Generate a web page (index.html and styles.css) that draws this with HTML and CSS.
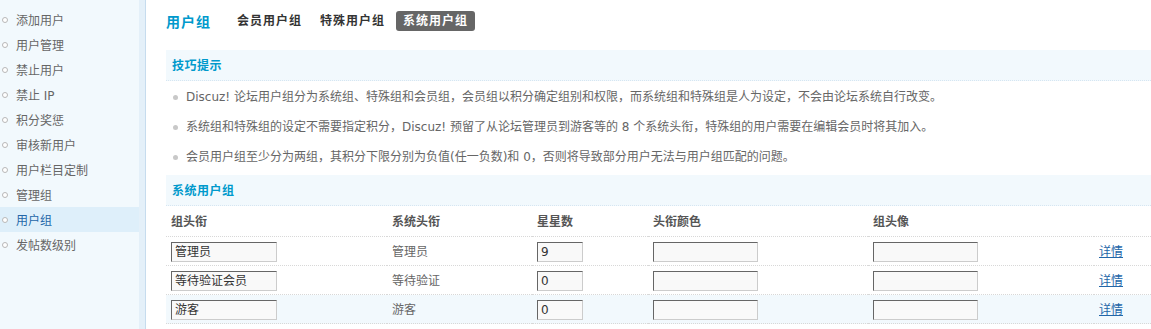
FILE: index.html
```html
<!DOCTYPE html>
<html lang="zh-CN">
<head>
    <meta charset="UTF-8">
    <title>用户组</title>
    <link rel="stylesheet" href="styles.css">
</head>
<body>
    <div class="side">
        <ul class="menu">
            <li><a href="#">添加用户</a></li>
            <li><a href="#">用户管理</a></li>
            <li><a href="#">禁止用户</a></li>
            <li><a href="#">禁止 IP</a></li>
            <li><a href="#">积分奖惩</a></li>
            <li><a href="#">审核新用户</a></li>
            <li><a href="#">用户栏目定制</a></li>
            <li><a href="#">管理组</a></li>
            <li class="on"><a href="#">用户组</a></li>
            <li><a href="#">发帖数级别</a></li>
        </ul>
    </div>

    <div class="main">
        <div class="itemtitle">
            <h3>用户组</h3>
            <ul class="tabs">
                <li><a href="#">会员用户组</a></li>
                <li><a href="#">特殊用户组</a></li>
                <li class="current"><a href="#">系统用户组</a></li>
            </ul>
        </div>

        <div class="partition">技巧提示</div>
        <ul class="tips">
            <li>Discuz! 论坛用户组分为系统组、特殊组和会员组，会员组以积分确定组别和权限，而系统组和特殊组是人为设定，不会由论坛系统自行改变。</li>
            <li>系统组和特殊组的设定不需要指定积分，Discuz! 预留了从论坛管理员到游客等的 8 个系统头衔，特殊组的用户需要在编辑会员时将其加入。</li>
            <li>会员用户组至少分为两组，其积分下限分别为负值(任一负数)和 0，否则将导致部分用户无法与用户组匹配的问题。</li>
        </ul>

        <div class="partition">系统用户组</div>
        <table class="tb">
            <colgroup>
                <col class="c1"><col class="c2"><col class="c3"><col class="c4"><col class="c5"><col>
            </colgroup>
            <tr>
                <th>组头衔</th>
                <th>系统头衔</th>
                <th>星星数</th>
                <th>头衔颜色</th>
                <th>组头像</th>
                <th></th>
            </tr>
            <tr>
                <td><input class="txt name" type="text" value="管理员"></td>
                <td>管理员</td>
                <td><input class="txt stars" type="text" value="9"></td>
                <td><input class="txt wide" type="text" value=""></td>
                <td><input class="txt wide" type="text" value=""></td>
                <td><a class="detail" href="#">详情</a></td>
            </tr>
            <tr>
                <td><input class="txt name" type="text" value="等待验证会员"></td>
                <td>等待验证</td>
                <td><input class="txt stars" type="text" value="0"></td>
                <td><input class="txt wide" type="text" value=""></td>
                <td><input class="txt wide" type="text" value=""></td>
                <td><a class="detail" href="#">详情</a></td>
            </tr>
            <tr class="hover">
                <td><input class="txt name" type="text" value="游客"></td>
                <td>游客</td>
                <td><input class="txt stars" type="text" value="0"></td>
                <td><input class="txt wide" type="text" value=""></td>
                <td><input class="txt wide" type="text" value=""></td>
                <td><a class="detail" href="#">详情</a></td>
            </tr>
        </table>
    </div>
</body>
</html>
```

FILE: styles.css
```css
body {
    margin: 0;
    display: flex;
    background: #fff;
    color: #666;
    font: 12px "DejaVu Sans", "Noto Sans CJK SC", sans-serif;
}
.side {
    width: 139px;
    height: 100vh;
    flex-shrink: 0;
    background: #f2f9fd;
    border-right: 6px solid #e4f0f9;
    box-shadow: 1px 0 0 #c6dcee;
}
.menu {
    list-style: none;
    margin: 0;
    padding: 7px 0 0;
}
.menu a {
    display: flex;
    align-items: center;
    gap: 8px;
    height: 25px;
    padding-left: 2px;
    color: #666;
    text-decoration: none;
}
.menu a::before {
    content: '';
    width: 4px;
    height: 4px;
    border: 1px solid #b8b8b8;
    border-radius: 50%;
    background: #fff;
}
.menu .on a {
    background: #deeffa;
    color: #2366a8;
}
.main {
    flex: 1;
    min-width: 0;
    padding-left: 21px;
}
.itemtitle {
    display: flex;
    align-items: center;
    height: 20px;
    margin: 11px 0 19px;
}
.itemtitle h3 {
    margin: 0 19px 0 0;
    font-size: 14px;
    letter-spacing: 1px;
    color: #09c;
}
.tabs {
    display: flex;
    gap: 4px;
    list-style: none;
    margin: 0;
    padding: 0;
}
.tabs a {
    display: block;
    padding: 0 7px 0 7px;
    line-height: 20px;
    font-weight: bold;
    letter-spacing: 1px;
    color: #333;
    text-decoration: none;
    border-radius: 3px;
}
.tabs .current a {
    background: #666;
    color: #fff;
}
.partition {
    padding: 2px 0 0 6px;
    line-height: 28px;
    background: #f2f9fd;
    border-bottom: 1px dotted #d6e6f2;
    color: #09c;
    font-weight: bold;
    letter-spacing: 0.5px;
}
.tips {
    list-style: none;
    margin: 1px 0 3px;
    padding: 0 0 0 7px;
}
.tips li {
    display: flex;
    align-items: center;
    line-height: 30px;
    white-space: nowrap;
}
.tips li::before {
    content: '';
    flex-shrink: 0;
    width: 5px;
    height: 5px;
    margin-right: 8px;
    border-radius: 50%;
    background: #c8c8c8;
}
.tb {
    width: 100%;
    table-layout: fixed;
    border-collapse: collapse;
}
.tb .c1 { width: 221px; }
.tb .c2 { width: 145px; }
.tb .c3 { width: 116px; }
.tb .c4 { width: 220px; }
.tb .c5 { width: 226px; }
.tb th {
    padding: 3px 5px 0;
    line-height: 27px;
    text-align: left;
    font-weight: bold;
    color: #555;
    border-bottom: 1px dotted #d8d8d8;
}
.tb td {
    padding: 5px 5px 3px;
    line-height: 20px;
    border-bottom: 1px dotted #d8d8d8;
}
.tb .hover td {
    background: #f2f9fd;
}
.txt {
    display: block;
    box-sizing: border-box;
    height: 20px;
    padding: 0 3px;
    border: 1px solid;
    border-color: #666 #ccc #ccc #666;
    background: #f9f9f9;
    color: #333;
    font: inherit;
    outline: none;
}
.txt.name { width: 106px; }
.txt.stars { width: 46px; }
.txt.wide { width: 105px; }
.detail {
    color: #2366a8;
    text-decoration: underline;
}
```
